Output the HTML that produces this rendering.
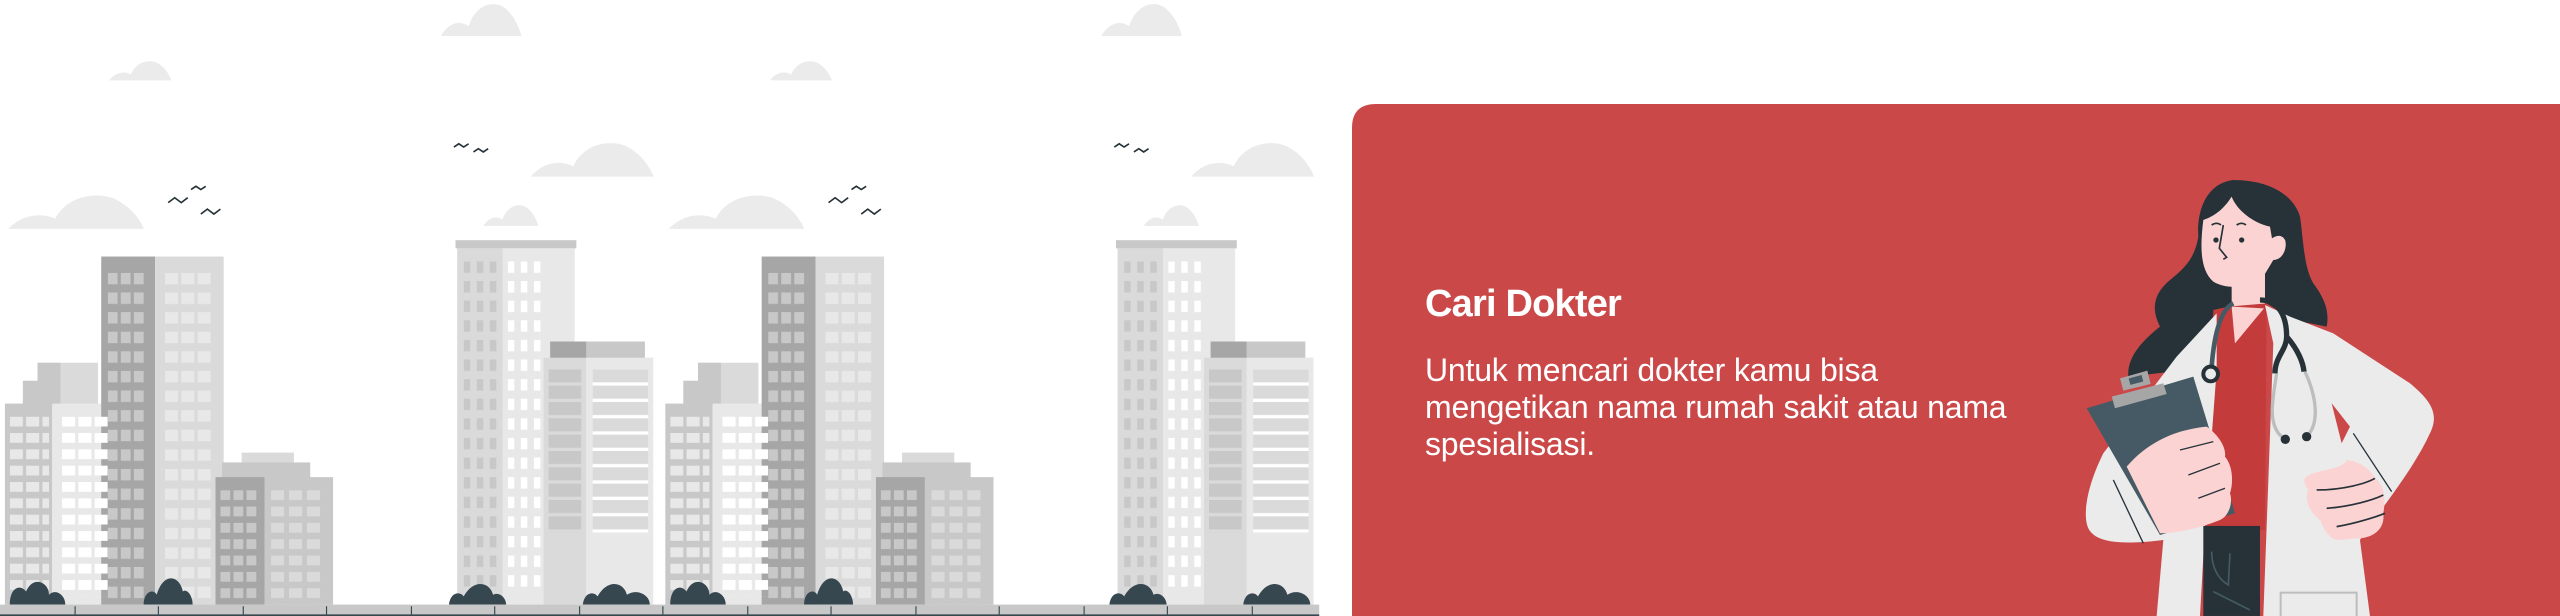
<!DOCTYPE html>
<html><head><meta charset="utf-8"><style>
html,body{margin:0;padding:0;background:#fff;width:2560px;height:616px;overflow:hidden;position:relative;font-family:"Liberation Sans",sans-serif}
svg{position:absolute;left:0;top:0}
.t{position:absolute;left:1425px;top:283px;color:#fff;font-weight:bold;font-size:38px;letter-spacing:-0.8px}
.b{position:absolute;left:1425px;top:352px;width:700px;color:#fff;font-size:32px;line-height:37px;letter-spacing:-0.2px}
</style></head><body>
<svg width="2560" height="616" viewBox="0 0 2560 616">
<defs>
<g id="cloud"><path d="M0,22 C5,14 12,12 18,16 C22,4 32,0 40,4 C46,8 50,15 52,22 Z" fill="#ebebeb"/></g>
<g id="tile">
 <use href="#cloud" transform="translate(270,0) scale(0.95,1)"/>
 <use href="#cloud" transform="translate(67,36) scale(0.73,0.6)"/>
 <use href="#cloud" transform="translate(325,85) scale(1.45,1.05)"/>
 <use href="#cloud" transform="translate(296,124) scale(0.65,0.65)"/>
 <use href="#cloud" transform="translate(5,117) scale(1.6,1.05)"/>
 <g fill="none" stroke="#263238" stroke-width="1">
  <path d="M278,90 l3,-2 l3,2 l3,-2"/><path d="M290,93 l3,-2 l3,2 l3,-2"/>
  <path d="M103,124 l4,-3 l4,3 l4,-3"/><path d="M117,116 l3,-2 l3,2 l3,-2"/><path d="M123,131 l4,-3 l4,3 l4,-3"/>
 </g>
 <rect x="23" y="222" width="37" height="26" fill="#dadada"/><rect x="23" y="222" width="14" height="26" fill="#c8c8c8"/>
 <rect x="14" y="233" width="10" height="15" fill="#c8c8c8"/>
 <rect x="3" y="247" width="29" height="123" fill="#c8c8c8"/><rect x="32" y="247" width="36" height="123" fill="#e8e8e8"/>
 <rect x="62" y="157" width="33" height="213" fill="#a6a6a6"/><rect x="95" y="157" width="42" height="213" fill="#dadada"/>
 <rect x="148" y="277" width="32" height="8" fill="#dadada"/>
 <rect x="136" y="283" width="54" height="10" fill="#c8c8c8"/>
 <rect x="132" y="292" width="30" height="78" fill="#a6a6a6"/><rect x="162" y="292" width="42" height="78" fill="#c8c8c8"/>
 <rect x="279" y="147" width="74" height="5" fill="#c8c8c8"/>
 <rect x="280" y="152" width="28" height="218" fill="#dadada"/><rect x="308" y="152" width="44" height="218" fill="#e8e8e8"/>
 <rect x="337" y="209" width="58" height="11" fill="#c8c8c8"/><rect x="337" y="209" width="22" height="11" fill="#a6a6a6"/>
 <rect x="333" y="219" width="26" height="151" fill="#dadada"/><rect x="359" y="219" width="41" height="151" fill="#e8e8e8"/>
</g>
</defs>
<g transform="scale(1.6327,1.634)">
 <use href="#tile"/><use href="#tile" transform="translate(404.5,0)"/>
</g>
<g transform="scale(1.6327,1.634)">
 <pattern id="p1" x="6" y="255" width="10" height="10" patternUnits="userSpaceOnUse"><rect width="8" height="6" fill="#e8e8e8"/></pattern>
 <pattern id="p2" x="38" y="255" width="10" height="10" patternUnits="userSpaceOnUse"><rect width="8" height="6" fill="#fff"/></pattern>
 <pattern id="p3" x="66" y="167" width="8" height="12" patternUnits="userSpaceOnUse"><rect width="6" height="7" fill="#c8c8c8"/></pattern>
 <pattern id="p4" x="101" y="167" width="10" height="12" patternUnits="userSpaceOnUse"><rect width="8" height="7" fill="#e8e8e8"/></pattern>
 <pattern id="p5" x="135" y="300" width="8" height="10" patternUnits="userSpaceOnUse"><rect width="6" height="6" fill="#c8c8c8"/></pattern>
 <pattern id="p6" x="166" y="300" width="11" height="10" patternUnits="userSpaceOnUse"><rect width="8" height="6" fill="#dadada"/></pattern>
 <pattern id="p7" x="284" y="160" width="8" height="12" patternUnits="userSpaceOnUse"><rect width="4" height="7" fill="#c8c8c8"/></pattern>
 <pattern id="p8" x="311" y="160" width="8" height="12" patternUnits="userSpaceOnUse"><rect width="4" height="7" fill="#fff"/></pattern>
 <pattern id="p9" x="336" y="226" width="20" height="10" patternUnits="userSpaceOnUse"><rect width="20" height="8" fill="#c8c8c8"/></pattern>
 <pattern id="p10" x="363" y="226" width="34" height="10" patternUnits="userSpaceOnUse"><rect width="34" height="8" fill="#dadada"/><rect y="8" width="34" height="2" fill="#fff"/></pattern>
 <g id="wtile">
  <rect x="6" y="255" width="24" height="110" fill="url(#p1)"/>
  <rect x="38" y="255" width="28" height="110" fill="url(#p2)"/>
  <rect x="66" y="167" width="24" height="200" fill="url(#p3)"/>
  <rect x="101" y="167" width="30" height="200" fill="url(#p4)"/>
  <rect x="135" y="300" width="24" height="70" fill="url(#p5)"/>
  <rect x="166" y="300" width="33" height="70" fill="url(#p6)"/>
  <rect x="284" y="160" width="22" height="200" fill="url(#p7)"/>
  <rect x="311" y="160" width="22" height="200" fill="url(#p8)"/>
  <rect x="333" y="219" width="67" height="151" fill="#dadada"/><rect x="359" y="219" width="41" height="151" fill="#e8e8e8"/>
  <rect x="336" y="226" width="20" height="100" fill="url(#p9)"/>
  <rect x="363" y="226" width="34" height="100" fill="url(#p10)"/>
  <g fill="#37474f">
   <path d="M6,370 C6,360 12,357 16,362 C20,352 30,356 30,364 C34,360 40,364 40,370Z"/>
   <path d="M88,370 C88,362 94,360 96,364 C100,350 110,352 112,362 C114,360 118,364 118,370Z"/>
   <path d="M275,370 C276,362 282,362 284,365 C290,354 300,356 302,364 C306,362 310,366 310,370Z"/>
   <path d="M357,370 C358,362 364,362 366,365 C372,354 382,356 384,364 C390,360 398,364 398,370Z"/>
  </g>
 </g>
 <use href="#wtile" transform="translate(404.5,0)"/>
 <rect x="0" y="370" width="808" height="7" fill="#c8c8c8"/>
 <rect x="0" y="376" width="808" height="1" fill="#37474f"/>
 <g stroke="#37474f" stroke-width="0.7">
  <path d="M46,371v5M97,371v5M149,371v5M200,371v5M252,371v5M303,371v5M355,371v5M406,371v5M458,371v5M509,371v5M561,371v5M612,371v5M664,371v5M715,371v5M767,371v5"/>
 </g>
</g>
<path d="M1352,128 Q1352,104 1376,104 L2560,104 L2560,616 L1352,616 Z" fill="#cb4849"/>
<g transform="translate(2060,170) scale(0.3333)">
 <path d="M520,30 C440,40 410,120 415,200 C405,260 380,290 330,330 C270,380 280,430 300,470 C250,510 200,560 205,620 L380,600 L520,400 L620,400 L700,450 L800,470 C810,420 790,380 760,340 C730,290 730,200 720,140 C700,70 620,30 520,30 Z" fill="#263238"/>
 <rect x="515" y="300" width="100" height="220" fill="#fcd3d3"/>
 <path d="M430,150 C420,230 420,300 460,335 C500,360 570,355 610,320 L640,270 C665,270 682,240 676,212 C668,192 648,196 636,205 L630,170 C580,160 530,120 515,80 C490,120 460,140 430,150 Z" fill="#fcd3d3"/>
 <g fill="none" stroke="#263238" stroke-width="5"><path d="M490,165 L478,235 L500,262 L490,268"/><path d="M455,165 q15,-10 28,0"/><path d="M530,165 q15,-10 28,0"/></g>
 <circle cx="468" cy="210" r="8" fill="#263238"/><circle cx="545" cy="210" r="8" fill="#263238"/>
 <path d="M505,410 L620,400 L615,1080 L440,1080 L460,420 Z" fill="#c43b3b"/>
 <path d="M515,410 L525,520 L612,415 Z" fill="#fcd3d3"/>
 <path d="M470,430 L350,560 L130,850 C90,930 70,1010 80,1060 C90,1110 150,1130 310,1110 L290,1338 L420,1338 L435,1070 L470,600 Z" fill="#ebebeb"/>
 <path d="M615,405 L640,520 L620,1070 L610,1338 L930,1338 L900,1110 C960,1020 1060,900 1110,790 C1140,730 1110,690 1050,640 L820,490 L690,440 Z" fill="#ebebeb"/>
 <path d="M815,700 L870,770 L845,820 Z" fill="#cb4849"/>
 <rect x="430" y="1068" width="170" height="270" fill="#263238"/>
 <path d="M455,1145 C455,1200 480,1230 505,1245 L510,1150 M460,1265 L570,1320" stroke="#455a64" stroke-width="5" fill="none"/>
 <rect x="662" y="1268" width="228" height="80" fill="none" stroke="#bdbdbd" stroke-width="6"/>
 <path d="M80,715 L400,620 L525,1030 L300,1095 Z" fill="#455a64"/>
 <path d="M155,680 L310,640 L320,672 L165,715 Z" fill="#a6a6a6"/>
 <path d="M180,625 L262,602 L272,642 L190,662 Z" fill="#a6a6a6"/><rect x="208" y="620" width="40" height="20" fill="#455a64" transform="rotate(-15 228 630)"/>
 <path d="M200,890 C260,820 340,780 440,770 C470,790 500,830 495,860 C520,890 520,940 510,970 C520,1000 505,1040 480,1050 C430,1070 360,1090 300,1090 Z" fill="#fcd3d3"/>
 <g stroke="#263238" stroke-width="4" fill="none"><path d="M360,840 L460,815"/><path d="M385,915 L480,880"/><path d="M415,985 L495,955"/><path d="M160,930 L250,1120"/><path d="M880,790 L995,965"/></g>
 <path d="M740,920 C760,900 850,900 860,870 C880,870 930,890 945,925 C980,950 975,1000 970,1030 C975,1070 950,1100 900,1105 L830,1110 C800,1100 790,1070 780,1050 C740,1020 735,980 745,960 C730,940 730,925 740,920 Z" fill="#fcd3d3"/>
 <g stroke="#263238" stroke-width="5" fill="none"><path d="M770,960 C850,960 920,940 945,925"/><path d="M800,1015 C870,1010 940,990 970,975"/><path d="M830,1070 C890,1060 950,1040 975,1030"/></g>
 <path d="M650,610 C640,680 620,760 665,800 M735,605 C770,680 780,760 740,800" stroke="#bdbdbd" stroke-width="10" fill="none"/>
 <path d="M520,400 C480,420 462,500 455,590" stroke="#455a64" stroke-width="14" fill="none"/>
 <circle cx="452" cy="612" r="22" fill="none" stroke="#263238" stroke-width="12"/>
 <path d="M600,390 C650,390 680,430 680,500 C680,540 645,560 645,610 M680,500 C715,540 730,580 732,605" stroke="#263238" stroke-width="16" fill="none"/>
 <circle cx="676" cy="808" r="14" fill="#263238"/><circle cx="740" cy="800" r="14" fill="#263238"/>
</g>
</svg>
<div class="t">Cari Dokter</div>
<div class="b">Untuk mencari dokter kamu bisa<br>mengetikan nama rumah sakit atau nama<br>spesialisasi.</div>
</body></html>
